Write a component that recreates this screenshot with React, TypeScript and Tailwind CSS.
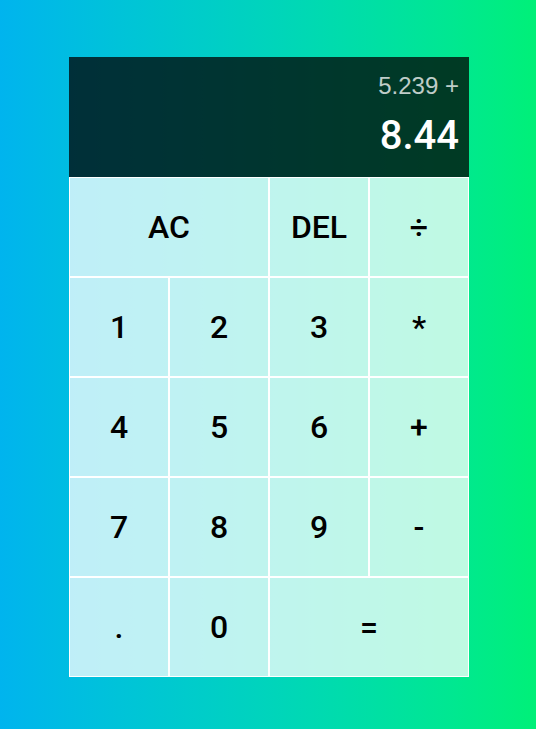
import React, { useState } from 'react';

const btn =
  'border border-white bg-white/75 text-[2rem] font-medium text-black cursor-pointer outline-none';

const App: React.FC = () => {
  const [previous] = useState('5.239 +');
  const [current] = useState('8.44');

  return (
    <div className="min-h-screen bg-gradient-to-r from-[#00B4EE] to-[#00F078] pt-[57px] pl-[2px] font-['Roboto',sans-serif]">
      <div className="grid justify-center grid-cols-[repeat(4,100px)] grid-rows-[minmax(120px,auto)_repeat(5,100px)]">
        {/* Output */}
        <div className="col-span-4 bg-black/75 flex flex-col items-end justify-around p-[10px] break-all">
          <div className="text-white/75 text-[1.5rem] font-['Liberation_Sans',sans-serif]">{previous}</div>
          <div className="text-white text-[2.5rem] font-medium">{current}</div>
        </div>

        <button className={`${btn} col-span-2`}>AC</button>
        <button className={btn}>DEL</button>
        <button className={btn}>÷</button>

        <button className={btn}>1</button>
        <button className={btn}>2</button>
        <button className={btn}>3</button>
        <button className={btn}>*</button>

        <button className={btn}>4</button>
        <button className={btn}>5</button>
        <button className={btn}>6</button>
        <button className={btn}>+</button>

        <button className={btn}>7</button>
        <button className={btn}>8</button>
        <button className={btn}>9</button>
        <button className={btn}>-</button>

        <button className={btn}>.</button>
        <button className={btn}>0</button>
        <button className={`${btn} col-span-2`}>=</button>
      </div>
    </div>
  );
};

export default App;
